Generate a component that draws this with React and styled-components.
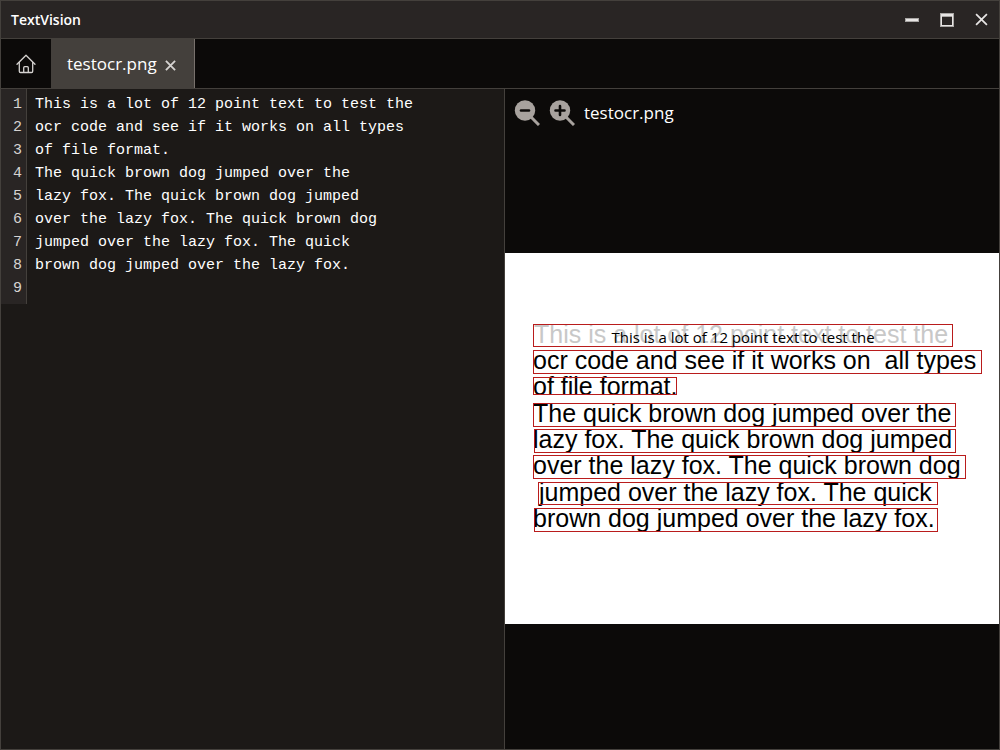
import React from "react";
import styled, { createGlobalStyle } from "styled-components";

const color = {
  bar: "#292524",
  edge: "#44403c",
  edgeLight: "#78716c",
  dark: "#0c0a09",
  editor: "#1c1917",
  text: "#ffffff",
  muted: "#d6d3d1",
  icon: "#a8a29e",
  region: "#b91c1c",
};

const uiFont = `"Open Sans", "Noto Sans", sans-serif`;
const codeFont = `"Liberation Mono", "DejaVu Sans Mono", monospace`;

const GlobalStyle = createGlobalStyle`
  *, *::before, *::after { box-sizing: border-box; }
  body { margin: 0; background: ${color.dark}; color: ${color.text}; font-family: ${uiFont}; }
  button { font: inherit; color: inherit; background: none; border: 0; padding: 0; cursor: pointer; }
`;

const Window = styled.div`
  display: flex;
  flex-direction: column;
  min-height: 100vh;
  border: 1px solid ${color.edge};
`;

const TitleBar = styled.header`
  display: flex;
  align-items: center;
  justify-content: space-between;
  height: 38px;
  padding-left: 10px;
  background: ${color.bar};
  border-bottom: 1px solid ${color.edge};
`;

const AppName = styled.h1`
  margin: 0;
  font-size: 14px;
  line-height: 20px;
  font-weight: 600;
`;

const WindowControls = styled.div`
  display: flex;
`;

const WindowButton = styled.button`
  display: grid;
  place-items: center;
  width: 35px;
  height: 37px;
  color: #e7e5e4;
`;

const TabBar = styled.nav`
  display: flex;
  height: 50px;
  background: ${color.dark};
  border-bottom: 1px solid ${color.edge};
`;

const HomeButton = styled.button`
  display: grid;
  place-items: center;
  width: 50px;
  color: ${color.muted};
`;

const Tab = styled.div`
  display: flex;
  align-items: center;
  gap: 7px;
  padding: 0 16px;
  background: ${color.edge};
  border-right: 1px solid ${color.edgeLight};
`;

const TabLabel = styled.button`
  font-size: 17px;
  line-height: 24px;
`;

const TabClose = styled.button`
  display: grid;
  place-items: center;
  width: 14px;
  height: 24px;
  padding-top: 4px;
  color: ${color.muted};
`;

const Workspace = styled.main`
  flex: 1;
  display: grid;
  grid-template-columns: 504fr 494fr;
`;

const EditorPane = styled.section`
  display: flex;
  align-items: flex-start;
  min-width: 0;
  background: ${color.editor};
  border-right: 1px solid ${color.edge};
`;

const Gutter = styled.ol`
  width: 26px;
  margin: 0;
  padding: 4px 4px;
  list-style: none;
  text-align: right;
  background: ${color.bar};
  border-right: 1px solid ${color.edge};
  color: ${color.muted};
  font: 15px/23px ${codeFont};
`;

const Editor = styled.textarea`
  flex: 1;
  align-self: stretch;
  min-width: 0;
  padding: 4px 8px;
  border: 0;
  outline: 0;
  resize: none;
  background: transparent;
  color: ${color.text};
  font: 15px/23px ${codeFont};
`;

const PreviewPane = styled.section`
  display: flex;
  flex-direction: column;
  min-width: 0;
  background: ${color.dark};
`;

const PreviewBar = styled.div`
  display: flex;
  align-items: center;
  gap: 9px;
  height: 39px;
  padding: 8px 9px 0;
`;

const ZoomButton = styled.button`
  display: grid;
  place-items: center;
  width: 26px;
  height: 26px;
`;

const FileName = styled.h2`
  margin: 0;
  font-size: 17px;
  line-height: 24px;
  font-weight: 400;
`;

const Viewer = styled.div`
  flex: 1;
  display: flex;
  align-items: center;
`;

const Scan = styled.div`
  position: relative;
  width: 100%;
  aspect-ratio: 4 / 3;
  overflow: hidden;
  background: #ffffff;
  color: #000000;
`;

const ScanLine = styled.div`
  position: absolute;
  left: ${(p) => p.$x}px;
  top: ${(p) => p.$y}px;
  color: ${(p) => (p.$faded ? "#c8c8c8" : "#000000")};
  font: 25px/28px "Liberation Sans", Arial, sans-serif;
  white-space: pre;
`;

const Region = styled.div`
  position: absolute;
  left: ${(p) => p.$x}px;
  top: ${(p) => p.$y}px;
  width: ${(p) => p.$w}px;
  height: ${(p) => p.$h}px;
  border: 1px solid ${color.region};
  text-align: center;
  font-size: 15px;
  line-height: 24px;
  white-space: nowrap;
`;

const lines = [
  "This is a lot of 12 point text to test the",
  "ocr code and see if it works on all types",
  "of file format.",
  "The quick brown dog jumped over the",
  "lazy fox. The quick brown dog jumped",
  "over the lazy fox. The quick brown dog",
  "jumped over the lazy fox. The quick",
  "brown dog jumped over the lazy fox.",
  "",
];

const scanLines = [
  { x: 29, y: 67, text: lines[0] },
  { x: 28, y: 93, text: "ocr code and see if it works on  all types" },
  { x: 28, y: 119, text: lines[2] },
  { x: 28, y: 146, text: lines[3] },
  { x: 28, y: 172, text: lines[4] },
  { x: 28, y: 198, text: lines[5] },
  { x: 34, y: 225, text: lines[6] },
  { x: 28, y: 251, text: lines[7] },
];

const regions = [
  { x: 28, y: 71, w: 420, h: 23 },
  { x: 28, y: 97, w: 449, h: 24 },
  { x: 28, y: 124, w: 144, h: 18 },
  { x: 28, y: 150, w: 423, h: 24 },
  { x: 29, y: 176, w: 422, h: 24 },
  { x: 28, y: 202, w: 433, h: 24 },
  { x: 33, y: 229, w: 400, h: 23 },
  { x: 29, y: 255, w: 404, h: 24 },
];

const hovered = 0;

function HomeIcon() {
  return (
    <svg width="20" height="20" viewBox="0 0 20 20" fill="none" stroke="currentColor" strokeWidth="1.3" strokeLinecap="round" strokeLinejoin="round" aria-hidden="true">
      <path d="M1 10.2 10 1.2l9 9" />
      <path d="M3.3 8.5v8.8c0 .7.5 1.2 1.2 1.2h11c.7 0 1.2-.5 1.2-1.2V8.5" />
      <path d="M7.7 18.3v-4.6c0-.6.4-1 1-1h2.6c.6 0 1 .4 1 1v4.6" />
    </svg>
  );
}

function CloseIcon({ size, weight }) {
  return (
    <svg width={size} height={size} viewBox="0 0 12 12" fill="none" stroke="currentColor" strokeWidth={weight} aria-hidden="true">
      <path d="M1 1l10 10M11 1 1 11" />
    </svg>
  );
}

function ZoomIcon({ plus }) {
  return (
    <svg width="26" height="26" viewBox="0 0 26 26" fill="none" aria-hidden="true">
      <path d="M16.5 16.5 25 25" stroke={color.icon} strokeWidth="3" />
      <circle cx="11" cy="10.5" r="10.2" fill={color.icon} />
      <path d={plus ? "M6.500 10.500h9M11 6v9" : "M7 10.500h8"} stroke={color.dark} strokeWidth="2.6" strokeLinecap="round" />
    </svg>
  );
}

export default function App() {
  return (
    <>
      <GlobalStyle />
      <Window>
        <TitleBar>
          <AppName>TextVision</AppName>
          <WindowControls>
            <WindowButton aria-label="Minimize">
              <svg width="14" height="14" aria-hidden="true">
                <rect x="0" y="5" width="14" height="4" fill="#a8a6a4" />
                <rect x="1" y="6" width="12" height="2" fill="#e7e5e4" />
              </svg>
            </WindowButton>
            <WindowButton aria-label="Maximize">
              <svg width="14" height="14" aria-hidden="true">
                <path fillRule="evenodd" d="M0 0h14v14H0zM2 4v8h10V4z" fill="#a8a6a4" />
                <path fillRule="evenodd" d="M1 1h12v12H1zM2 3v9h10V3z" fill="#e7e5e4" />
              </svg>
            </WindowButton>
            <WindowButton aria-label="Close">
              <CloseIcon size={13} weight={1.6} />
            </WindowButton>
          </WindowControls>
        </TitleBar>
        <TabBar>
          <HomeButton aria-label="Home">
            <HomeIcon />
          </HomeButton>
          <Tab>
            <TabLabel>testocr.png</TabLabel>
            <TabClose aria-label="Close testocr.png">
              <CloseIcon size={11} weight={2} />
            </TabClose>
          </Tab>
        </TabBar>
        <Workspace>
          <EditorPane>
            <Gutter aria-hidden="true">
              {lines.map((_, i) => (
                <li key={i}>{i + 1}</li>
              ))}
            </Gutter>
            <Editor aria-label="Recognized text" spellCheck={false} defaultValue={lines.join("\n")} />
          </EditorPane>
          <PreviewPane>
            <PreviewBar>
              <ZoomButton aria-label="Zoom out">
                <ZoomIcon />
              </ZoomButton>
              <ZoomButton aria-label="Zoom in">
                <ZoomIcon plus />
              </ZoomButton>
              <FileName>testocr.png</FileName>
            </PreviewBar>
            <Viewer>
              <Scan>
                {scanLines.map((l, i) => (
                  <ScanLine key={i} $x={l.x} $y={l.y} $faded={i === hovered}>
                    {l.text}
                  </ScanLine>
                ))}
                {regions.map((r, i) => (
                  <Region key={i} $x={r.x} $y={r.y} $w={r.w} $h={r.h}>
                    {i === hovered ? lines[i] : null}
                  </Region>
                ))}
              </Scan>
            </Viewer>
          </PreviewPane>
        </Workspace>
      </Window>
    </>
  );
}
